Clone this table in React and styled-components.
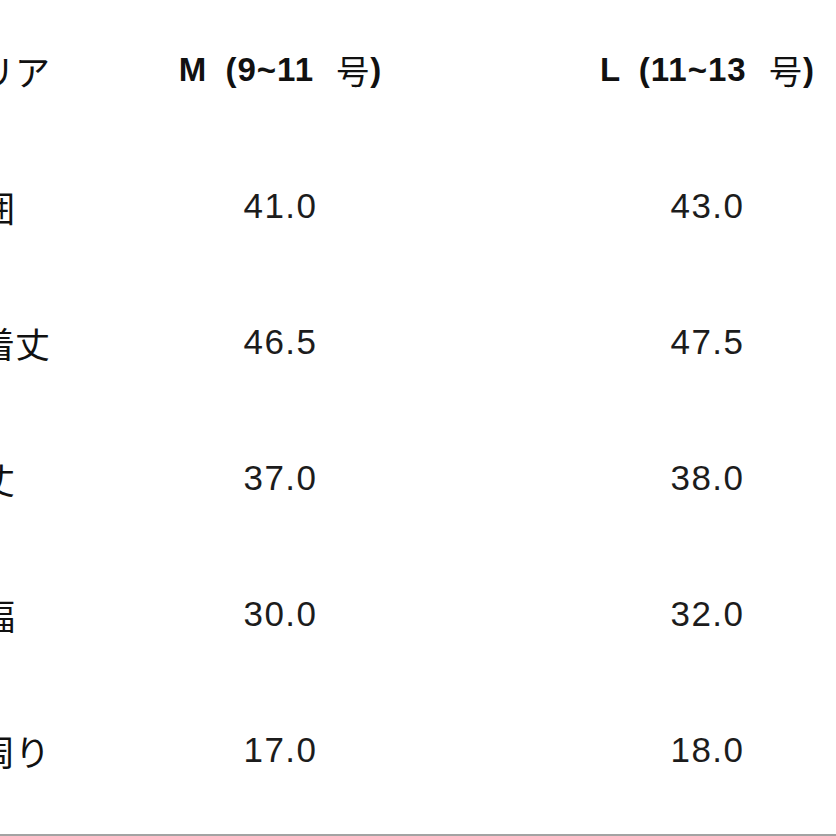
import React from 'react';
import styled, { createGlobalStyle } from 'styled-components';

const GlobalStyle = createGlobalStyle`
  html, body {
    margin: 0;
    padding: 0;
    background: #ffffff;
    overflow: hidden;
  }
  body {
    width: 836px;
    height: 836px;
  }
`;

const Sheet = styled.div`
  width: 836px;
  height: 834px;
  box-sizing: content-box;
  border-bottom: 2px solid #a3a3a3;
  overflow: hidden;
  background: #ffffff;
`;

const Table = styled.div`
  display: grid;
  grid-template-columns: 122px 427px 427px;
  grid-auto-rows: 136px;
  margin-left: -55px;
  padding-top: 2px;
  width: 976px;
`;

const Cell = styled.div`
  display: flex;
  align-items: center;
  justify-content: ${p => (p.$label ? 'flex-start' : 'center')};
  white-space: pre;
  color: ${p => (p.$head || p.$label ? '#111111' : '#1c1c1c')};
  font-family: ${p =>
    p.$label
      ? '"Noto Sans CJK JP", "Noto Sans", sans-serif'
      : '"Liberation Sans", "Noto Sans CJK JP", sans-serif'};
  font-size: ${p => (p.$head ? '33px' : p.$label ? '35px' : '35px')};
  font-weight: ${p => (p.$head ? 700 : 400)};
  letter-spacing: ${p => (p.$head ? '1px' : p.$label ? '0' : '1.5px')};
  word-spacing: ${p => (p.$head ? '8px' : '0')};
`;

const Kanji = styled.span`
  font-family: "Noto Sans CJK JP", sans-serif;
  font-weight: 400;
  margin-left: 4px;
`;

const rows = [
  ['首囲', '41.0', '43.0'],
  ['総着丈', '46.5', '47.5'],
  ['袖丈', '37.0', '38.0'],
  ['肩幅', '30.0', '32.0'],
  ['袖周り', '17.0', '18.0'],
];

const sizes = [
  { name: 'M', range: '9~11' },
  { name: 'L', range: '11~13' },
];

export default function App() {
  return (
    <>
      <GlobalStyle />
      <Sheet>
        <Table>
          <Cell $label>エリア</Cell>
          {sizes.map(s => (
            <Cell $head key={s.name}>
              {`${s.name} (${s.range} `}
              <Kanji>号</Kanji>)
            </Cell>
          ))}
          {rows.map(([label, m, l]) => (
            <React.Fragment key={label}>
              <Cell $label>{label}</Cell>
              <Cell>{m}</Cell>
              <Cell>{l}</Cell>
            </React.Fragment>
          ))}
        </Table>
      </Sheet>
    </>
  );
}
